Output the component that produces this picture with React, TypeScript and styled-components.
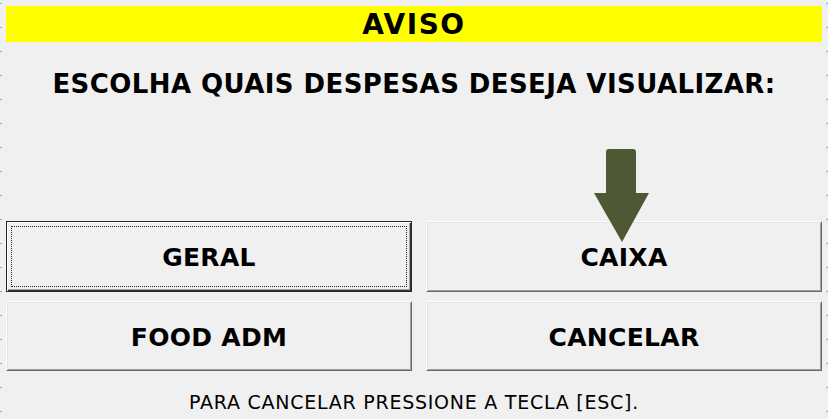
import React from "react";
import styled, { createGlobalStyle } from "styled-components";

const GlobalStyle = createGlobalStyle`
  html, body {
    margin: 0;
    padding: 0;
    background: #f0f0f0;
  }
  * { box-sizing: border-box; }
`;

const Form = styled.div`
  position: relative;
  width: 828px;
  height: 419px;
  padding: 6px 6px 0 6px;
  display: flex;
  flex-direction: column;
  background-color: #f0f0f0;
  background-image:
    linear-gradient(#a4a4a4 0 1px, transparent 1px),
    linear-gradient(#a4a4a4 0 1px, transparent 1px);
  background-size: 2px 24px, 2px 24px;
  background-position: 0 3px, 826px 3px;
  background-repeat: repeat-y, repeat-y;
  font-family: "DejaVu Sans", Verdana, sans-serif;
  color: #000;
  overflow: hidden;
`;

const TitleBar = styled.div`
  height: 36px;
  background: #ffff00;
  display: flex;
  align-items: center;
  justify-content: center;
  font-weight: bold;
  font-size: 28px;
  letter-spacing: 1.5px;
`;

const Heading = styled.div`
  margin-top: 26px;
  height: 32px;
  display: flex;
  align-items: center;
  justify-content: center;
  font-weight: bold;
  font-size: 26px;
  letter-spacing: 0.42px;
  white-space: nowrap;
`;

const ButtonGrid = styled.div`
  margin-top: 121px;
  display: grid;
  grid-template-columns: 406px 396px;
  grid-template-rows: 71px 70px;
  column-gap: 14px;
  row-gap: 9px;
`;

const Button = styled.div<{ $default?: boolean }>`
  position: relative;
  display: flex;
  align-items: center;
  justify-content: center;
  padding-top: 2px;
  font-weight: bold;
  font-size: 25px;
  letter-spacing: 0.3px;
  white-space: nowrap;
  background: #f0f0f0;
  border: 1px solid;
  border-color: ${(p) =>
    p.$default ? "#2a2525" : "#ffffff #696969 #696969 #ffffff"};
  box-shadow: ${(p) =>
    p.$default
      ? "inset 1px 1px #fdfdfd, inset -1px -1px #3c3636, inset -2px -2px #a0a0a0"
      : "inset 1px 1px #e3e3e3, inset -1px -1px #a0a0a0"};
`;

const FocusRect = styled.span`
  position: absolute;
  inset: 4px 4px 4px 4px;
  border: 1px dotted #222;
  pointer-events: none;
`;

const Footer = styled.div`
  flex: 1;
  display: flex;
  align-items: center;
  justify-content: center;
  padding-top: 14px;
  font-size: 19px;
  letter-spacing: 0.75px;
  white-space: nowrap;
`;

const Arrow = styled.svg`
  position: absolute;
  left: 594px;
  top: 149px;
`;

export default function App() {
  return (
    <>
      <GlobalStyle />
      <Form>
        <TitleBar>AVISO</TitleBar>
        <Heading>ESCOLHA QUAIS DESPESAS DESEJA VISUALIZAR:</Heading>
        <ButtonGrid>
          <Button $default>
            <FocusRect />
            GERAL
          </Button>
          <Button>CAIXA</Button>
          <Button>FOOD ADM</Button>
          <Button>CANCELAR</Button>
        </ButtonGrid>
        <Footer>PARA CANCELAR PRESSIONE A TECLA [ESC].</Footer>
        <Arrow width="56" height="94" viewBox="0 0 56 94">
          <path
            d="M15 0 H39 Q42 0 42 3 V44 H55 L28 93 L0 44 H12 V3 Q12 0 15 0 Z"
            fill="#4e5835"
          />
        </Arrow>
      </Form>
    </>
  );
}
